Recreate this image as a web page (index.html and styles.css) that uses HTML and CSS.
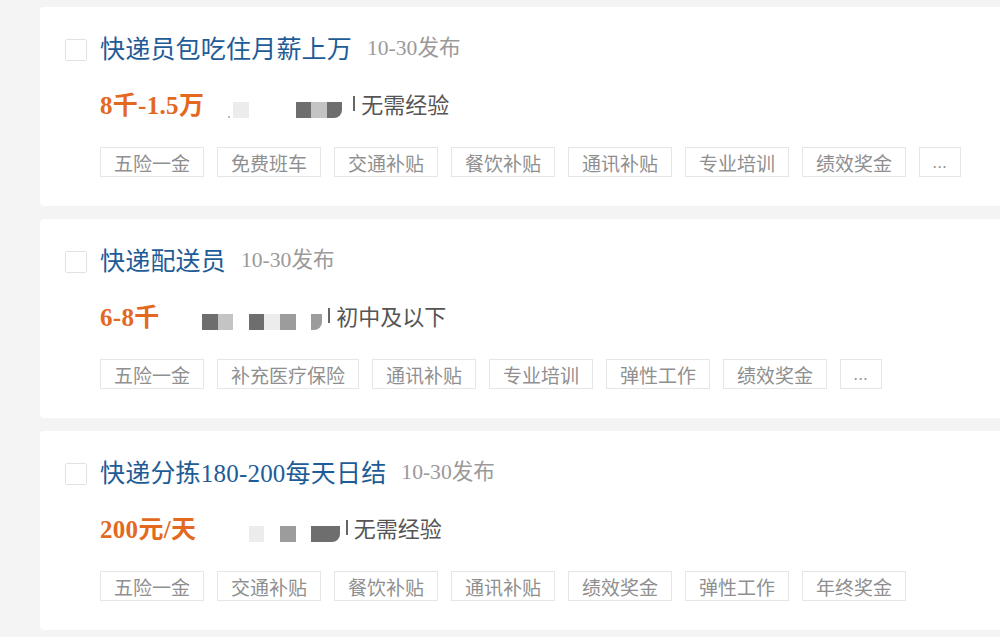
FILE: index.html
```html
<!DOCTYPE html>
<html lang="zh-CN">
<head>
<meta charset="utf-8">
<title>职位列表</title>
<link rel="stylesheet" href="styles.css">
</head>
<body>
<div class="list">
  <div class="card">
    <div class="title-row"><span class="check"></span><a class="title">快递员包吃住月薪上万</a><span class="date">10-30发布</span></div>
    <div class="info-row">
      <span class="salary">8千-1.5万</span>
      <span class="blur">
        <i class="c"></i><i class="c c-dot"></i><i class="c c-xl"></i><i class="c"></i><i class="c"></i><i class="c"></i><i class="c c-d"></i><i class="c c-l"></i><i class="c c-d c-end"></i><i class="c c-tail"></i>
      </span>
      <span class="sep"></span><span class="exp">无需经验</span>
    </div>
    <div class="tags">
      <span class="tag">五险一金</span><span class="tag">免费班车</span><span class="tag">交通补贴</span><span class="tag">餐饮补贴</span><span class="tag">通讯补贴</span><span class="tag">专业培训</span><span class="tag">绩效奖金</span><span class="tag more">...</span>
    </div>
  </div>

  <div class="card">
    <div class="title-row"><span class="check"></span><a class="title">快递配送员</a><span class="date">10-30发布</span></div>
    <div class="info-row">
      <span class="salary">6-8千</span>
      <span class="blur">
        <i class="c c-d"></i><i class="c c-l"></i><i class="c"></i><i class="c c-d"></i><i class="c c-xl"></i><i class="c c-m"></i><i class="c"></i><i class="c c-m c-part c-end"></i>
      </span>
      <span class="sep"></span><span class="exp">初中及以下</span>
    </div>
    <div class="tags">
      <span class="tag">五险一金</span><span class="tag">补充医疗保险</span><span class="tag">通讯补贴</span><span class="tag">专业培训</span><span class="tag">弹性工作</span><span class="tag">绩效奖金</span><span class="tag more">...</span>
    </div>
  </div>

  <div class="card">
    <div class="title-row"><span class="check"></span><a class="title">快递分拣180-200每天日结</a><span class="date">10-30发布</span></div>
    <div class="info-row">
      <span class="salary">200元/天</span>
      <span class="blur">
        <i class="c"></i><i class="c"></i><i class="c"></i><i class="c c-xl"></i><i class="c"></i><i class="c c-m"></i><i class="c"></i><i class="c c-d"></i><i class="c c-d c-part2 c-end"></i>
      </span>
      <span class="sep"></span><span class="exp">无需经验</span>
    </div>
    <div class="tags">
      <span class="tag">五险一金</span><span class="tag">交通补贴</span><span class="tag">餐饮补贴</span><span class="tag">通讯补贴</span><span class="tag">绩效奖金</span><span class="tag">弹性工作</span><span class="tag">年终奖金</span>
    </div>
  </div>
</div>
</body>
</html>
```

FILE: styles.css
```css
html, body {
  margin: 0;
  padding: 0;
  background: #f4f4f4;
  overflow: hidden;
}

body {
  font-family: "Liberation Serif", "Noto Sans CJK SC", serif;
}

.list {
  display: flex;
  flex-direction: column;
  gap: 13px;
  padding: 7px 0 0 40px;
  margin-right: -10px;
}

.card {
  background: #fff;
  border-radius: 4px;
  height: 199px;
  box-sizing: border-box;
  padding: 25px 0 0 25px;
  display: flex;
  flex-direction: column;
}

.title-row {
  display: flex;
  align-items: center;
  height: 36px;
  white-space: nowrap;
}

.check {
  flex: none;
  width: 22px;
  height: 22px;
  box-sizing: border-box;
  border: 1px solid #e2e2e2;
  border-radius: 2px;
  margin-right: 13px;
}

.title {
  font-size: 25px;
  color: #1e5c97;
  line-height: 36px;
  margin-right: 15px;
  letter-spacing: 0.2px;
}

.date {
  font-size: 21.6px;
  color: #9a9a9a;
  line-height: 32px;
  margin-bottom: 4px;
}

.info-row {
  margin: 17px 0 0 35px;
  display: flex;
  align-items: center;
  height: 36px;
  white-space: nowrap;
}

.salary {
  width: 102px;
  flex: none;
  font-size: 25px;
  font-weight: bold;
  color: #e3691f;
  letter-spacing: 0.3px;
}

.blur {
  display: flex;
  align-items: center;
  height: 16px;
  margin-top: 14px;
}

.c {
  display: block;
  width: 15.6px;
  height: 16px;
}

.c-d { background: #6e6e6e; }
.c-m { background: #9c9c9c; }
.c-l { background: #c4c4c4; }
.c-xl { background: #ececec; }
.c-dot { background: linear-gradient(to right, transparent 70%, #bbb 70%, #bbb 80%, transparent 80%) no-repeat 0 14px / 100% 2px; }
.c-part { width: 11px; }
.c-part2 { width: 13px; }
.c-end { border-bottom-right-radius: 8px; }
.c-tail { width: 5px; }

.sep {
  display: block;
  width: 2px;
  height: 15px;
  background: #666;
  margin: 0 6px 0 6px;
  flex: none;
}

.exp {
  font-size: 22px;
  color: #555;
}

.tags {
  margin: 26px 0 0 35px;
  display: flex;
  gap: 13px;
  white-space: nowrap;
}

.tag {
  display: flex;
  align-items: center;
  justify-content: center;
  height: 30px;
  box-sizing: border-box;
  padding: 0 13px;
  border: 1px solid #e6e6e6;
  font-family: "Noto Sans CJK SC", sans-serif;
  font-size: 19px;
  color: #8f8f8f;
}

.tag.more {
  width: 42px;
  padding: 0;
  font-size: 14px;
  letter-spacing: 1px;
}
```
